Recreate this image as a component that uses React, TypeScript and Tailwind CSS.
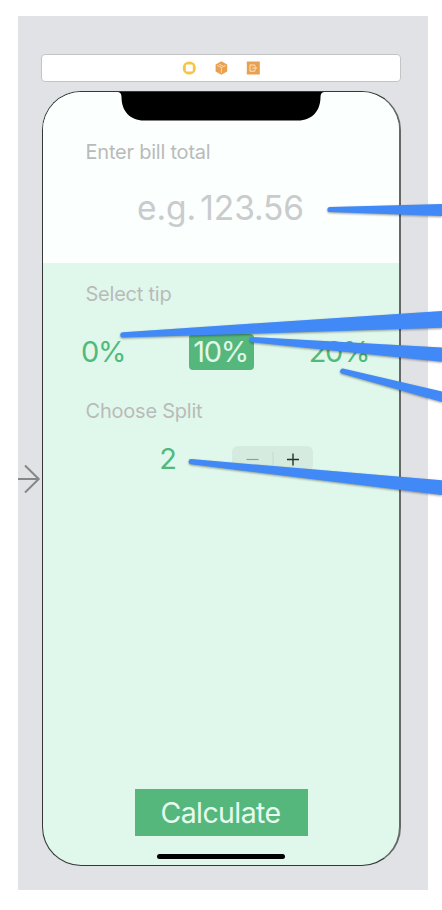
import React from "react";

const tips = [
  { value: "0%", cls: "ml-[38px] w-[44px] text-[#50ba7d]" },
  { value: "10%", cls: "ml-[64px] w-[65px] rounded-[4px] bg-[#55b77b] pr-[2px] text-[#e0f8eb]" },
  { value: "20%", cls: "ml-[54px] w-[62px] text-[#50ba7d]" },
];

function Label({ children }: { children: React.ReactNode }) {
  return (
    <div className="h-6 pl-[42.5px] text-[20px] leading-6 tracking-[-0.22px] whitespace-nowrap text-[#b9bbba]">
      {children}
    </div>
  );
}

function Toolbar() {
  return (
    <div className="ml-[23px] flex h-[28px] w-[360px] items-center justify-center gap-[18px] rounded-[4px] border border-[#c3c5c5] bg-white">
      <svg width="14" height="14" viewBox="0 0 14 14">
        <circle cx="7.3" cy="7" r="6.6" fill="#f5c544" />
        <rect x="3.8" y="3.5" width="7" height="7" rx="1.2" fill="#fff" />
      </svg>
      <svg width="14" height="14" viewBox="0 0 14 14">
        <path d="M7.4 .3 13.2 3.4V10.4L7.4 13.7 1.6 10.4V3.4Z" fill="#e9a14f" />
        <path d="M3 4.4 7.4 6.5 11.8 4.4M7.4 6.5V12M5.1 3.3 9.6 5.4" fill="none" stroke="#f9dfc0" strokeWidth=".9" />
      </svg>
      <svg width="14" height="14" viewBox="0 0 14 14">
        <path d="M.8.5h13v13H.8z" fill="#e9a14f" />
        <path d="M8.8 5V4H4v6.2h4.8V9M6.2 7.1h4M8.6 5.2 10.6 7.1 8.6 9" fill="none" stroke="#fbe4c9" strokeWidth="1" />
      </svg>
    </div>
  );
}

function Callouts() {
  return (
    <svg
      className="pointer-events-none absolute top-0 left-0 [filter:drop-shadow(0_1.5px_1px_rgba(0,0,0,0.4))]"
      width="442"
      height="910"
      viewBox="0 0 442 910"
      fill="#4089f7"
    >
      <path d="M330 206.9 450 203.8V216.4L330 212.1A2.6 2.6 0 0 1 330 206.9Z" />
      <path d="M123 332.2 450 310.5V327.6L123 337.6A2.7 2.7 0 0 1 123 332.2Z" />
      <path d="M252.6 337 450 348V362.5L252 342.2A2.6 2.6 0 0 1 252.6 337Z" />
      <path d="M343 368.5 450 393.3V404.2L341.6 373.6A2.7 2.7 0 0 1 343 368.5Z" />
      <path d="M191.4 459.1 450 481V496L191 464.3A2.6 2.6 0 0 1 191.4 459.1Z" />
    </svg>
  );
}

export default function App() {
  return (
    <div className="relative h-[910px] w-[442px] overflow-hidden bg-white pt-4 pl-[18px] font-['Inter',sans-serif]">
      <div className="relative h-[874px] w-[410px] bg-[#e1e2e5] pt-[38px]">
        <Toolbar />
        <div className="relative mt-[9px] ml-6 flex h-[775px] w-[359px] flex-col overflow-hidden rounded-[39px] border border-r-2 border-[#333837] border-r-[#646968] bg-[#e0f8eb]">
          <svg className="absolute top-0 left-[75px]" width="206" height="29" viewBox="0 0 206 29">
            <path d="M0 0H206Q202.5.7 202.5 5C202.5 19 194 28.5 180 28.5H26C12 28.5 3.5 19 3.5 5Q3.5.7 0 0Z" fill="#000" />
          </svg>
          <div className="h-[171px] shrink-0 bg-[#fbfffe] pt-12">
            <Label>Enter bill total</Label>
            <div className="mt-6 h-10 pl-[94px] text-[33.5px] leading-10 tracking-[-0.1px] whitespace-nowrap text-[#c9cbcc] [word-spacing:-5px]">
              e.g. 123.56
            </div>
          </div>
          <div className="pt-[19px]">
            <Label>Select tip</Label>
            <div className="mt-[28px] flex h-[36px]">
              {tips.map((t) => (
                <div
                  key={t.value}
                  className={`flex h-[36px] shrink-0 items-center justify-center text-[29px] leading-9 tracking-[-1.3px] ${t.cls}`}
                >
                  {t.value}
                </div>
              ))}
            </div>
            <div className="mt-[29px]">
              <Label>Choose Split</Label>
            </div>
            <div className="mt-[18px] flex h-9 items-start">
              <div className="ml-[115px] w-[20px] text-center text-[29px] leading-9 text-[#50ba7d]">2</div>
              <div className="mt-[5px] ml-[54px] flex h-[25px] w-[81px] items-center rounded-[6px] bg-[#d5ebdf]">
                <svg width="81" height="25" viewBox="0 0 81 25" fill="none">
                  <path d="M14.5 13.5h12" stroke="#8f9f96" strokeWidth="1.2" />
                  <path d="M41 6v14" stroke="#c5dacf" />
                  <path d="M55 13.5h12M61 7.5v12" stroke="#26322b" strokeWidth="1.4" />
                </svg>
              </div>
            </div>
          </div>
          <div className="mt-auto ml-[92px] flex h-[47px] w-[173px] shrink-0 items-center justify-center bg-[#55b77b] pt-[2px] pr-[2px] text-[28.5px] tracking-[-0.6px] text-[#e6fbf0]">
            Calculate
          </div>
          <div className="mt-[18px] mb-[6px] ml-[114px] h-[5px] w-[128px] shrink-0 rounded-full bg-black" />
        </div>
        <svg className="absolute top-[448px] left-0" width="23" height="30" viewBox="0 0 23 30" fill="none" stroke="#868788" strokeWidth="2">
          <path d="M0 15H21M7 1.5 20.7 15 7 28.5" />
        </svg>
      </div>
      <Callouts />
    </div>
  );
}
